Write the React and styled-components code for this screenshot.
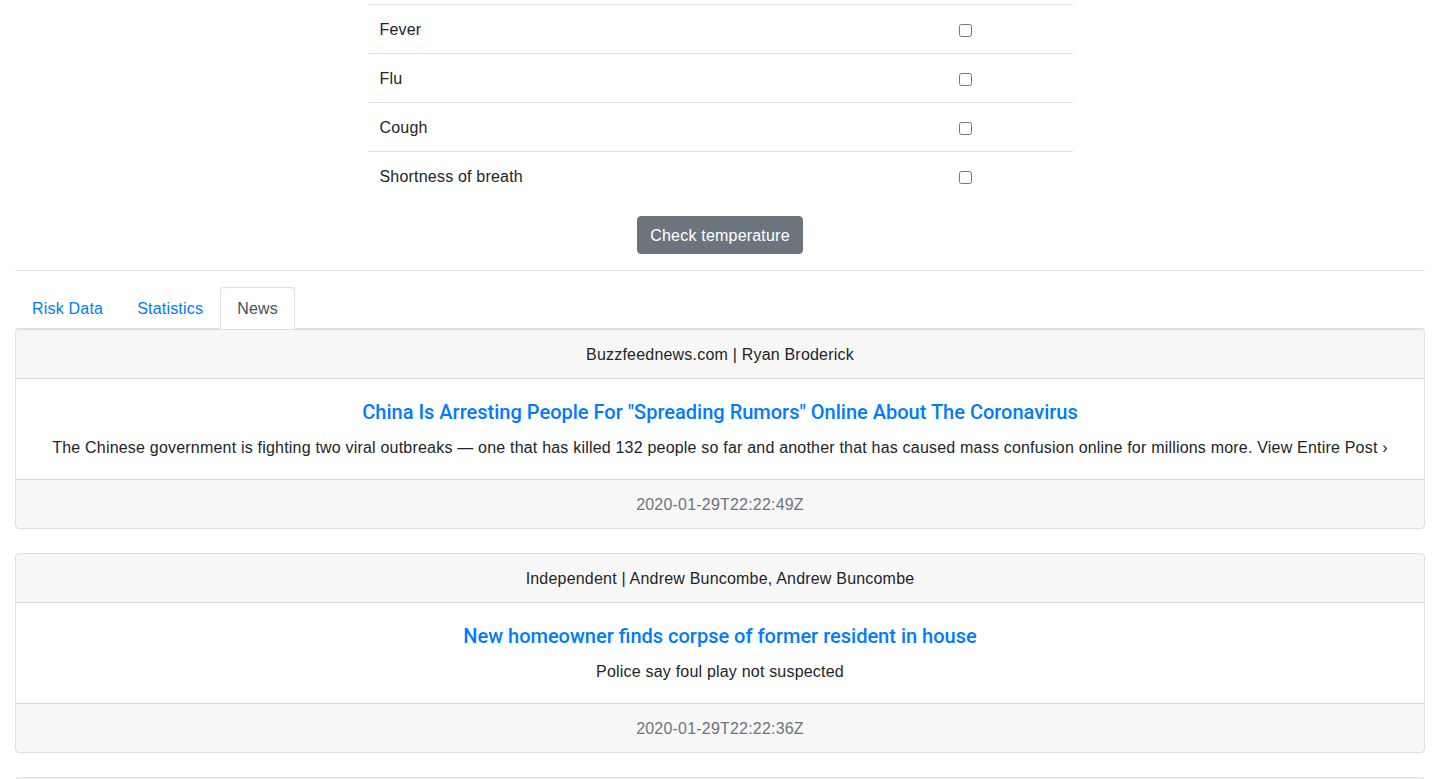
import React, { useState } from "react";
import styled, { createGlobalStyle } from "styled-components";

const GlobalStyle = createGlobalStyle`
  * { box-sizing: border-box; }
  body {
    margin: 0;
    font-family: "Liberation Sans", Arial, sans-serif;
    font-size: 16px;
    line-height: 1.5;
    letter-spacing: 0.2px;
    color: #212529;
    background: #fff;
  }
`;

const Page = styled.div`
  padding: 4px 15px 0;
`;

const SymptomTable = styled.div`
  width: 705px;
  margin: 0 auto;
`;

const Row = styled.div`
  display: grid;
  grid-template-columns: 1fr 126px;
  border-top: 1px solid #dee2e6;
`;

const Cell = styled.div`
  padding: 13px 12px 11px;
  display: flex;
  align-items: center;
`;

const Check = styled.input`
  width: 13px;
  height: 13px;
  margin: 1px 0 0 0;
`;

const Center = styled.div`
  display: flex;
  justify-content: center;
  margin-top: 16px;
`;

const Button = styled.button`
  font-family: inherit;
  font-size: 16px;
  line-height: 24px;
  letter-spacing: 0.2px;
  padding: 7px 12px 5px;
  color: #fff;
  background: #6c757d;
  border: 1px solid #6c757d;
  border-radius: 4px;
  cursor: pointer;
`;

const Rule = styled.hr`
  margin: 16px 0;
  border: 0;
  border-top: 1px solid rgba(0, 0, 0, 0.1);
`;

const Tabs = styled.nav`
  display: flex;
  border-bottom: 1px solid #dee2e6;
`;

const Tab = styled.a`
  display: block;
  padding: 9px 16px 7px;
  margin-bottom: -1px;
  border: 1px solid transparent;
  border-color: ${(p) => (p.$active ? "#dee2e6 #dee2e6 #fff" : "transparent")};
  border-top-left-radius: 4px;
  border-top-right-radius: 4px;
  color: ${(p) => (p.$active ? "#495057" : "#007bff")};
  background: ${(p) => (p.$active ? "#fff" : "transparent")};
  text-decoration: none;
  cursor: pointer;
`;

const Card = styled.div`
  border: 1px solid rgba(0, 0, 0, 0.125);
  border-radius: 4px;
  margin-bottom: 24px;
  text-align: center;
  overflow: hidden;
`;

const CardHeader = styled.div`
  padding: 13px 20px 11px;
  background: rgba(0, 0, 0, 0.03);
  border-bottom: 1px solid rgba(0, 0, 0, 0.125);
`;

const CardBody = styled.div`
  padding: 21px 20px 19px;
`;

const Title = styled.a`
  display: block;
  font-family: Roboto, "Liberation Sans", sans-serif;
  font-size: 20px;
  line-height: 24px;
  font-weight: 500;
  letter-spacing: 0;
  color: #007bff;
  text-decoration: none;
  margin-bottom: 12px;
`;

const Text = styled.p`
  margin: 0;
`;

const CardFooter = styled.div`
  padding: 13px 20px 11px;
  background: rgba(0, 0, 0, 0.03);
  border-top: 1px solid rgba(0, 0, 0, 0.125);
  color: #6c757d;
`;

const symptoms = ["Fever", "Flu", "Cough", "Shortness of breath"];

const news = [
  {
    source: "Buzzfeednews.com | Ryan Broderick",
    title: 'China Is Arresting People For "Spreading Rumors" Online About The Coronavirus',
    text: "The Chinese government is fighting two viral outbreaks — one that has killed 132 people so far and another that has caused mass confusion online for millions more. View Entire Post ›",
    date: "2020-01-29T22:22:49Z",
  },
  {
    source: "Independent | Andrew Buncombe, Andrew Buncombe",
    title: "New homeowner finds corpse of former resident in house",
    text: "Police say foul play not suspected",
    date: "2020-01-29T22:22:36Z",
  },
  {
    source: "Reuters | Staff",
    title: "Airlines suspend flights to China as virus spreads",
    text: "Several carriers have cut services amid the outbreak.",
    date: "2020-01-29T22:20:11Z",
  },
];

export default function App() {
  const [tab, setTab] = useState("news");
  return (
    <Page>
      <GlobalStyle />
      <SymptomTable>
        {symptoms.map((s) => (
          <Row key={s}>
            <Cell>{s}</Cell>
            <Cell>
              <Check type="checkbox" />
            </Cell>
          </Row>
        ))}
      </SymptomTable>
      <Center>
        <Button>Check temperature</Button>
      </Center>
      <Rule />
      <Tabs>
        <Tab $active={tab === "risk"} onClick={() => setTab("risk")}>Risk Data</Tab>
        <Tab $active={tab === "stats"} onClick={() => setTab("stats")}>Statistics</Tab>
        <Tab $active={tab === "news"} onClick={() => setTab("news")}>News</Tab>
      </Tabs>
      {news.map((n) => (
        <Card key={n.date}>
          <CardHeader>{n.source}</CardHeader>
          <CardBody>
            <Title href="#">{n.title}</Title>
            <Text>{n.text}</Text>
          </CardBody>
          <CardFooter>{n.date}</CardFooter>
        </Card>
      ))}
    </Page>
  );
}
